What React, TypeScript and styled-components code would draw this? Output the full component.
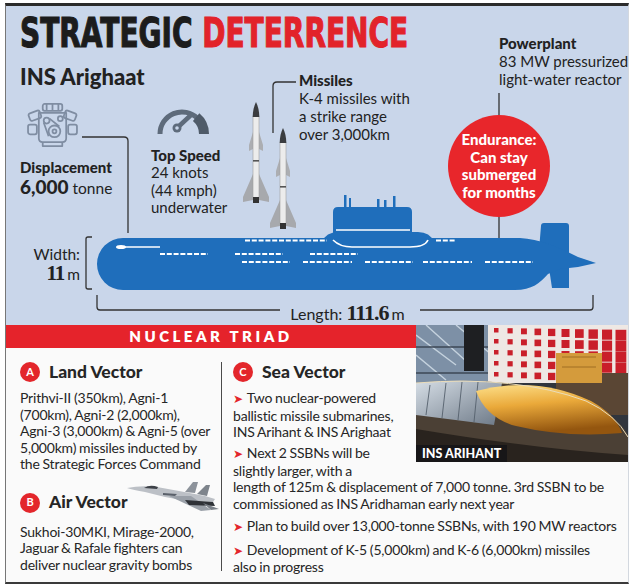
import React from 'react';
import styled, { createGlobalStyle } from 'styled-components';

const GlobalStyle = createGlobalStyle`
  html, body {
    margin: 0;
    padding: 0;
    background: #fff;
  }
  body {
    font-family: Lato, "Liberation Sans", sans-serif;
    color: #222;
  }
`;

const Frame = styled.div`
  margin: 3px 0 0 5px;
  width: 622px;
  border-top: 3px solid #2b2b2b;
  border-left: 1px solid #777;
  border-right: 1px solid #d3d8df;
  border-bottom: 2px solid #3a3a3a;
`;

/* ---------- top diagram ---------- */

const TopPanel = styled.section`
  position: relative;
  isolation: isolate;
  height: 319px;
  padding-left: 14px;
  background: #c9d6ea;
  display: grid;
  grid-template-columns: 131px 89px 59px 149px 1fr;
  grid-template-rows: 49px 185px 1fr;
`;

const Layer = styled.svg`
  position: absolute;
  inset: 0;
  z-index: -1;
`;

const Title = styled.h1`
  grid-column: 1 / 5;
  grid-row: 1;
  margin: 7px 0 0;
  font-family: "DejaVu Sans", sans-serif;
  font-weight: 700;
  font-size: 40px;
  line-height: 40px;
  white-space: nowrap;
  color: #1c1c1c;
  -webkit-text-stroke: 1.2px currentColor;
  transform: scaleX(0.7);
  transform-origin: left center;
`;

const Red = styled.span`
  color: #e2232a;
`;

const Column = styled.div<{ $col: number; $top: number }>`
  grid-column: ${(p) => p.$col};
  grid-row: 2;
  padding-top: ${(p) => p.$top}px;
  display: flex;
  flex-direction: column;
  align-items: flex-start;
`;

const ShipName = styled.h2`
  margin: 0;
  font-size: 22px;
  line-height: 26px;
  font-weight: 900;
  white-space: nowrap;
`;

const CalloutHead = styled.div<{ $mt?: number }>`
  margin-top: ${(p) => p.$mt ?? 0}px;
  font-size: 15px;
  line-height: 18px;
  font-weight: 900;
  white-space: nowrap;
`;

const CalloutText = styled.div<{ $lh?: number }>`
  font-size: 15px;
  line-height: ${(p) => p.$lh ?? 18}px;
  white-space: nowrap;
`;

const BigLine = styled.div`
  font-size: 15.5px;
  line-height: 22px;
  white-space: nowrap;
`;

const BigNum = styled.span`
  font-size: 19px;
  font-weight: 900;
`;

const IconWrap = styled.div<{ $mt: number; $ml: number }>`
  margin: ${(p) => p.$mt}px 0 0 ${(p) => p.$ml}px;
  line-height: 0;
`;

const PowerCol = styled.div`
  grid-column: 5;
  grid-row: 1 / 3;
  padding-top: 28px;
`;

const PowerText = styled.div`
  padding-left: 51px;
`;

const Endurance = styled.div`
  margin-top: 27px;
  width: 102px;
  height: 102px;
  border-radius: 50%;
  background: #e8262b;
  color: #fff;
  display: flex;
  align-items: center;
  justify-content: center;
  text-align: center;
  font-size: 15px;
  line-height: 17.5px;
  font-weight: 900;
`;

const DimRow = styled.div`
  grid-column: 1 / -1;
  grid-row: 3;
`;

const WidthLabel = styled.div`
  margin-top: 5px;
  width: 60px;
  text-align: right;
  font-size: 15.5px;
  line-height: 18px;
`;

const SerifNum = styled.span<{ $size: number }>`
  font-family: "Liberation Serif", serif;
  font-weight: 700;
  font-size: ${(p) => p.$size}px;
  line-height: 1;
  letter-spacing: -1px;
  margin-right: 3px;
`;

const LengthLabel = styled.div`
  margin: 18px 0 0 77px;
  width: 501px;
  text-align: center;
  font-size: 16px;
  line-height: 22px;
`;

/* ---------- nuclear triad ---------- */

const Bottom = styled.section`
  display: flow-root;
  height: 257px;
  background: #fafafa;
  font-size: 14px;
  line-height: 16.5px;
  letter-spacing: -0.2px;
  word-spacing: -0.5px;
  color: #262626;
`;

const Photo = styled.div`
  float: right;
  position: relative;
  width: 212px;
  height: 137px;
  overflow: hidden;
`;

const PhotoTag = styled.span`
  position: absolute;
  left: 0;
  bottom: 0;
  height: 17px;
  padding: 0 6px;
  background: rgba(22, 22, 24, 0.92);
  color: #fff;
  font-size: 12.5px;
  line-height: 17px;
  font-weight: 900;
  letter-spacing: 0;
  word-spacing: 0;
`;

const TriadBar = styled.div`
  display: flow-root;
  height: 23px;
  background: #e5232b;
  color: #fff;
  text-align: center;
  font-size: 15px;
  line-height: 23px;
  font-weight: 800;
  letter-spacing: 3.5px;
`;

const LeftCol = styled.div`
  float: left;
  width: 193px;
  height: 209px;
  margin: 14px 11px 0 14px;
  padding-right: 8px;
  border-right: 1.5px solid #4a4a4a;
  white-space: nowrap;
`;

const SeaCol = styled.div`
  padding-top: 14px;
`;

const VectorHead = styled.div<{ $h?: number; $mt?: number }>`
  display: flex;
  align-items: center;
  gap: 9px;
  height: ${(p) => p.$h ?? 20}px;
  margin-top: ${(p) => p.$mt ?? 0}px;
  font-size: 17.5px;
  font-weight: 900;
  letter-spacing: 0;
  word-spacing: 0;
  white-space: nowrap;
`;

const Badge = styled.span`
  flex: none;
  width: 20px;
  height: 20px;
  border-radius: 50%;
  background: #e3262b;
  color: #fff;
  font-size: 11px;
  font-weight: 700;
  display: grid;
  place-items: center;
`;

const Body = styled.p<{ $mt: number }>`
  margin: ${(p) => p.$mt}px 0 0;
`;

const Arrow = styled.span`
  font-family: "DejaVu Sans", sans-serif;
  color: #e3262b;
  font-size: 12px;
  margin-right: 4px;
`;

const JetWrap = styled.div`
  margin: -10px 0 0 -10px;
  line-height: 0;
`;

/* ---------- drawings ---------- */

const Missile = ({ x, y }: { x: number; y: number }) => (
  <g transform={`translate(${x} ${y})`}>
    <path d="M-3 72 L-13 95 L-13 100 L-3 98 Z M3 72 L13 95 L13 100 L3 98 Z" fill="#a7a9ad" />
    <path d="M-3 30 L-7 43 L-7 49 L-3 47 Z M3 30 L7 43 L7 49 L3 47 Z" fill="#acaeb2" />
    <rect x="-3" y="14" width="6" height="82" fill="#ececec" stroke="#a0a0a0" strokeWidth="0.6" />
    <path d="M0 0 C2 4 3.3 9 3.3 15 L-3.3 15 C-3.3 9 -2 4 0 0 Z" fill="#3a3c3f" />
    <rect x="-3" y="58" width="6" height="1.6" fill="#555" />
    <rect x="-3" y="95" width="6" height="6" fill="#333" />
  </g>
);

const Diagram = () => (
  <Layer width="622" height="319" viewBox="6 6 622 319">
    <g fill="none" stroke="#333" strokeWidth="1.3">
      <path d="M82 137 H124 Q128 137 128 141 V233" />
      <path d="M273 133 V86 Q273 82 277 82 H296" />
      <path d="M499 93 V115 M499 217 V240" />
      <path d="M92 237 H88 Q86 237 86 239 V287 Q86 289 88 289 H92" />
      <path d="M97 295 V307 Q97 310 100 310 H280 M420 310 H590 Q593 310 593 307 V295" />
    </g>
    <Missile x={256} y={102} />
    <Missile x={283} y={128} />
    <g fill="#1f6ebb">
      <rect x="344" y="195" width="2.5" height="14" />
      <rect x="349" y="198" width="2" height="10" />
      <rect x="377" y="199" width="2.5" height="9" />
      <rect x="384" y="200" width="2.5" height="8" />
      <rect x="393" y="196" width="2.5" height="12" />
      <path d="M333 238 V212 Q333 207 338 207 H407 Q412 207 412 212 V238 Z" />
      <path d="M322 242 Q326 232 338 232 H418 Q430 232 434 242 Z" />
      <path d="M538 262 L541 226 Q541 223 544 223 H566 Q569 223 569 226 V262 Z" />
      <path d="M549 268 H569 V288 H552 Z" />
      <path d="M123 238 H520 C540 239 560 248 578 257 L596 263 L578 267 L560 269 L548 274 C540 283 532 290 515 290 H123 A26 26 0 0 1 123 238 Z" />
    </g>
    <g fill="none" stroke="#fff">
      <path d="M336 230 H410" strokeWidth="1.6" />
      <path d="M333 240 Q340 247 352 247 H410 Q425 247 428 240" strokeWidth="1.6" />
      <path d="M121 247 H160" strokeWidth="1.6" />
      <path
        d="M245 240.5 H327 M436 240.5 H456 M160 254 H208 M235 254 H283 M310 254 H358 M242 262 H290 M303 262 H352 M365 262 H413 M423 262 H472 M485 262 H533"
        strokeWidth="2"
        strokeDasharray="5 1.8"
      />
    </g>
    <ellipse cx="121" cy="247" rx="5" ry="2" fill="#fff" />
  </Layer>
);

const EngineIcon = () => (
  <svg width="51" height="45" viewBox="0 0 52 46">
    <g fill="none" stroke="#7f8da2" strokeWidth="1.8" strokeLinejoin="round">
      <rect x="16" y="1" width="20" height="7" rx="2" />
      <path d="M20 1 V8 M26 1 V8 M32 1 V8" />
      <rect x="2" y="9" width="12" height="8" rx="2" transform="rotate(-20 8 13)" />
      <rect x="38" y="9" width="12" height="8" rx="2" transform="rotate(20 44 13)" />
      <rect x="1" y="22" width="9" height="10" rx="2" />
      <rect x="42" y="22" width="9" height="10" rx="2" />
      <path d="M12 10 H40 V36 Q40 40 36 40 H16 Q12 40 12 36 Z" />
      <path d="M16 40 V44 H36 V40" />
      <circle cx="28" cy="29" r="6" />
      <circle cx="28" cy="29" r="2" />
      <circle cx="20" cy="18" r="3" />
      <circle cx="34" cy="16" r="2.5" />
      <path d="M17 20 L22 34 M23 16 L33 24" />
    </g>
  </svg>
);

const GaugeIcon = () => (
  <svg width="54" height="28" viewBox="0 0 54 28">
    <path d="M5 27 A22 22 0 0 1 42.6 11.4" fill="none" stroke="#5e6b7b" strokeWidth="5" />
    <path d="M44.35 6.32 A27 27 0 0 1 54 27 H44 A17 17 0 0 0 37.93 13.98 Z" fill="#4f5b69" />
    <path d="M22 21 L36 8" stroke="#5e6b7b" strokeWidth="4.5" strokeLinecap="round" />
    <circle cx="22" cy="21" r="4.5" fill="#5e6b7b" />
    <circle cx="22" cy="21" r="1.8" fill="#c9d6ea" />
  </svg>
);

const JetIcon = () => (
  <svg width="92" height="32" viewBox="0 0 92 32">
    <path d="M58 10 L66 0 L71 0 L68 11 Z" fill="#8d939b" />
    <path d="M70 12 L79 3 L83 3 L80 14 Z" fill="#7e848c" />
    <path d="M0 6 Q14 3 30 5 L52 9 L78 14 L88 17 L86 20 L60 19 L38 15 L18 10 Q6 8 0 6 Z" fill="#bcc0c6" />
    <path d="M17 6 Q23 2 31 5 L30 7 Z" fill="#3d4148" />
    <path d="M42 14 L64 14 L84 28 L74 29 Z" fill="#9aa0a8" />
    <path d="M58 18 L86 20 L88 24 L62 23 Z" fill="#2f3237" />
    <path d="M76 21 L92 27 L84 28 Z" fill="#7a8088" />
    <path d="M36 11 L50 12 L48 14 L36 13 Z" fill="#5a606a" />
  </svg>
);

// red panels on the shed wall behind the boat, a little bigger towards the right
const wallSquares: { x: number; y: number; s: number }[] = [];
for (let r = 0; r < 5; r++) {
  for (let c = 0; c < 10; c++) {
    const s = 4.5 + c * 0.7;
    wallSquares.push({ x: 78 + c * 13.5, y: 3 + r * 11 + c * 0.2, s });
  }
}

const PhotoArt = () => (
  <svg width="212" height="137" viewBox="0 0 212 137">
    <defs>
      <linearGradient id="gold" x1="0" y1="0" x2="0.25" y2="1">
        <stop offset="0" stopColor="#fde08a" />
        <stop offset="0.45" stopColor="#eaa93a" />
        <stop offset="1" stopColor="#94560f" />
      </linearGradient>
      <linearGradient id="steel" x1="0" y1="0" x2="1" y2="1">
        <stop offset="0" stopColor="#d6dee6" />
        <stop offset="1" stopColor="#6c7886" />
      </linearGradient>
    </defs>
    <rect width="212" height="137" fill="#30353d" />
    <rect width="76" height="62" fill="#7d90a6" />
    <path d="M0 10 L40 40 M10 0 L60 45 M40 0 L76 30 M0 30 L30 55" stroke="#c5d2de" strokeWidth="1.4" />
    <path d="M0 22 H76 M0 48 H76" stroke="#3c4756" strokeWidth="1.5" />
    <rect x="72" width="140" height="58" fill="#eee8e4" />
    {wallSquares.map((q, i) => (
      <rect key={i} x={q.x} y={q.y} width={q.s} height={q.s} fill="#c91f2a" />
    ))}
    <rect x="140" y="48" width="72" height="42" fill="#5a4634" />
    <rect x="140" y="28" width="46" height="30" fill="#d49b3c" />
    <path d="M146 32 H180 M146 42 H180" stroke="#a06e22" strokeWidth="1" />
    <rect x="48" width="20" height="46" fill="#1e1f22" />
    <path d="M0 58 Q90 50 160 72 Q200 88 212 110 L212 137 L0 137 Z" fill="#4b4035" />
    <path d="M0 58 Q45 53 86 58 L78 100 Q40 95 0 90 Z" fill="url(#steel)" />
    <path d="M14 60 L10 90 M30 58 L26 93 M46 57 L42 95 M62 57 L58 97" stroke="#55606c" strokeWidth="0.9" />
    <path d="M60 66 Q120 50 175 76 Q200 90 206 108 Q150 113 100 101 Q70 93 60 66 Z" fill="url(#gold)" />
    <path d="M0 58 Q100 50 170 76 Q200 90 212 112" fill="none" stroke="#eadcba" strokeWidth="1" />
    <path d="M0 104 Q120 124 212 130 L212 137 L0 137 Z" fill="#29231e" />
  </svg>
);

const App = () => (
  <>
    <GlobalStyle />
    <Frame>
      <TopPanel>
        <Diagram />
        <Title>
          STRATEGIC <Red>DETERRENCE</Red>
        </Title>

        <Column $col={1} $top={9}>
          <ShipName>INS Arighaat</ShipName>
          <IconWrap $mt={13} $ml={7}>
            <EngineIcon />
          </IconWrap>
          <CalloutHead $mt={10}>Displacement</CalloutHead>
          <BigLine>
            <BigNum>6,000</BigNum> tonne
          </BigLine>
        </Column>

        <Column $col={2} $top={52}>
          <IconWrap $mt={0} $ml={4}>
            <GaugeIcon />
          </IconWrap>
          <CalloutHead $mt={11}>Top Speed</CalloutHead>
          <CalloutText $lh={17.5}>
            24 knots
            <br />
            (44 kmph)
            <br />
            underwater
          </CalloutText>
        </Column>

        <Column $col={4} $top={16}>
          <CalloutHead>Missiles</CalloutHead>
          <CalloutText>
            K-4 missiles with
            <br />
            a strike range
            <br />
            over 3,000km
          </CalloutText>
        </Column>

        <PowerCol>
          <PowerText>
            <CalloutHead>Powerplant</CalloutHead>
            <CalloutText>
              83 MW pressurized
              <br />
              light-water reactor
            </CalloutText>
          </PowerText>
          <Endurance>
            Endurance:
            <br />
            Can stay
            <br />
            submerged
            <br />
            for months
          </Endurance>
        </PowerCol>

        <DimRow>
          <WidthLabel>
            Width:
            <br />
            <SerifNum $size={21}>11</SerifNum>m
          </WidthLabel>
          <LengthLabel>
            Length: <SerifNum $size={22}>111.6</SerifNum>m
          </LengthLabel>
        </DimRow>
      </TopPanel>

      <Bottom>
        <Photo>
          <PhotoArt />
          <PhotoTag>INS ARIHANT</PhotoTag>
        </Photo>
        <TriadBar>NUCLEAR TRIAD</TriadBar>

        <LeftCol>
          <VectorHead>
            <Badge>A</Badge>
            Land Vector
          </VectorHead>
          <Body $mt={8}>
            Prithvi-II (350km), Agni-1
            <br />
            (700km), Agni-2 (2,000km),
            <br />
            Agni-3 (3,000km) &amp; Agni-5 (over
            <br />
            5,000km) missiles inducted by
            <br />
            the Strategic Forces Command
          </Body>
          <VectorHead $h={32} $mt={14}>
            <Badge>B</Badge>
            Air Vector
            <JetWrap>
              <JetIcon />
            </JetWrap>
          </VectorHead>
          <Body $mt={5}>
            Sukhoi-30MKI, Mirage-2000,
            <br />
            Jaguar &amp; Rafale fighters can
            <br />
            deliver nuclear gravity bombs
          </Body>
        </LeftCol>

        <SeaCol>
          <VectorHead>
            <Badge>C</Badge>
            Sea Vector
          </VectorHead>
          <Body $mt={8}>
            <Arrow>➤</Arrow>Two nuclear-powered
            <br />
            ballistic missile submarines,
            <br />
            INS Arihant &amp; INS Arighaat
          </Body>
          <Body $mt={4.5}>
            <Arrow>➤</Arrow>Next 2 SSBNs will be
            <br />
            slightly larger, with a
            <br />
            length of 125m &amp; displacement of 7,000 tonne. 3rd SSBN to be
            <br />
            commissioned as INS Aridhaman early next year
          </Body>
          <Body $mt={5.5}>
            <Arrow>➤</Arrow>Plan to build over 13,000-tonne SSBNs, with 190 MW reactors
          </Body>
          <Body $mt={6.5}>
            <Arrow>➤</Arrow>Development of K-5 (5,000km) and K-6 (6,000km) missiles
            <br />
            also in progress
          </Body>
        </SeaCol>
      </Bottom>
    </Frame>
  </>
);

export default App;
